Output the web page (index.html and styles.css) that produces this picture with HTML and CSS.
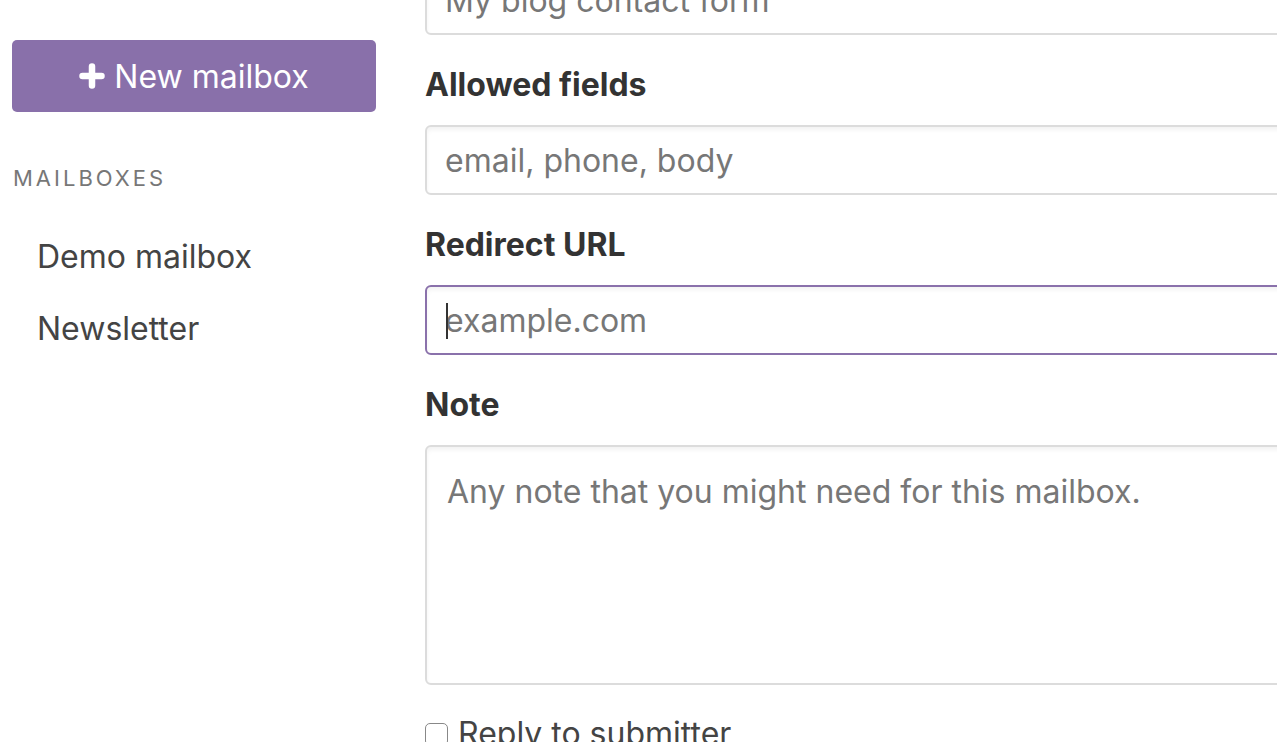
FILE: index.html
```html
<!DOCTYPE html>
<html>
<head>
<meta charset="utf-8">
<link rel="stylesheet" href="styles.css">
</head>
<body>
<div class="app">
  <aside class="sidebar">
    <button class="new-btn" type="button">
      <svg class="plus" viewBox="0 0 26 26" width="26" height="26"><path d="M13 3.5v19M3.5 13h19" stroke="#fff" stroke-width="6.5" stroke-linecap="round" fill="none"/></svg>
      <span>New mailbox</span>
    </button>
    <div class="section-title">MAILBOXES</div>
    <ul class="mailbox-list">
      <li>Demo mailbox</li>
      <li>Newsletter</li>
    </ul>
  </aside>
  <main class="form">
    <div class="input first">My blog contact form</div>
    <label class="label">Allowed fields</label>
    <div class="input"><span class="ph">email, phone, body</span></div>
    <label class="label">Redirect URL</label>
    <div class="input focused"><span class="caret"></span><span class="ph">example.com</span></div>
    <label class="label">Note</label>
    <div class="input textarea"><span class="ph">Any note that you might need for this mailbox.</span></div>
    <div class="check-row"><span class="checkbox"></span><span class="check-label">Reply to submitter</span></div>
  </main>
</div>
</body>
</html>
```
FILE: styles.css
```css
html, body {
  margin: 0;
  padding: 0;
  background: #fff;
  overflow: hidden;
  height: 742px;
}
body {
  font-family: Inter, "Open Sans", "Liberation Sans", sans-serif;
  color: #333;
}
.app {
  display: flex;
  align-items: flex-start;
  gap: 49px;
  padding-left: 12px;
}
.sidebar {
  width: 364px;
  flex: 0 0 364px;
  padding-top: 40px;
}
.new-btn {
  width: 364px;
  height: 72px;
  border: 0;
  border-radius: 5px;
  background: #8970aa;
  color: #fff;
  font-family: inherit;
  font-size: 32px;
  display: flex;
  align-items: center;
  justify-content: center;
  gap: 9px;
  padding: 0;
}
.plus { display: block; }
.section-title {
  margin-top: 53px;
  font-size: 22px;
  letter-spacing: 3px;
  color: #777;
  line-height: 26px;
  padding-left: 1px;
}
.mailbox-list {
  list-style: none;
  margin: 46px 0 0;
  padding: 0 0 0 25px;
}
.mailbox-list li {
  font-size: 32px;
  color: #444;
  line-height: 40px;
  height: 72px;
}
.form {
  flex: 0 0 1000px;
  display: flex;
  flex-direction: column;
}
.input {
  box-sizing: border-box;
  height: 70px;
  border: 2px solid #dcdcdc;
  border-radius: 6px;
  box-shadow: inset 0 3px 4px rgba(0,0,0,0.05);
  padding: 0 18px;
  font-size: 32px;
  display: flex;
  align-items: center;
  position: relative;
  color: #777;
}
.input.first { margin-top: -35px; }
.ph { color: #777; }
.input.focused { border-color: #8a71ab; }
.caret {
  position: absolute;
  left: 19px;
  top: 16px;
  width: 2px;
  height: 36px;
  background: #333;
}
.input.textarea {
  height: 240px;
  align-items: flex-start;
  padding: 26px 20px;
  line-height: 38px;
}
.label {
  margin-top: 30px;
  margin-bottom: 20px;
  font-size: 32px;
  font-weight: 700;
  line-height: 40px;
  color: #333;
}
.check-row {
  margin-top: 29px;
  display: flex;
  align-items: flex-start;
  gap: 10px;
}
.checkbox {
  box-sizing: border-box;
  margin-top: 9px;
  width: 23px;
  height: 23px;
  border: 1.5px solid #888;
  border-radius: 5px;
  background: #fff;
}
.check-label {
  font-size: 32px;
  color: #444;
  line-height: 40px;
}
```
